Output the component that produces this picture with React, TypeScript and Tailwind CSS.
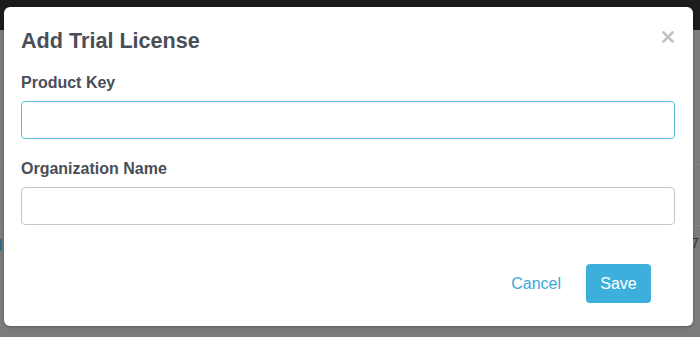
import React from "react";

const App: React.FC = () => {
  return (
    <div className="relative h-[337px] w-[700px] overflow-hidden bg-[#7b7b7b] font-['Liberation_Sans',Arial,sans-serif]">
      {/* page behind the overlay */}
      <div className="h-[30px] bg-[#1c1c1c]" />
      <div className="mt-[134px] h-px bg-[#858585]" />
      <div className="mt-[60px] h-px bg-[#858585]" />
      <div className="flex items-start justify-between">
        <div className="mt-[13px] h-[12px] w-[2px] bg-[#2f6f86]" />
        <span className="mt-[10px] mr-[1px] text-[14px] leading-none text-[#333]">7</span>
      </div>

      {/* MODAL */}
      <div className="absolute left-[4px] top-[7px] h-[319px] w-[689px] rounded-[6px] bg-white pl-[17px] pr-[18px] pt-[22px] shadow-[0_1px_3px_rgba(0,0,0,0.25)]">
        <div className="flex items-start justify-between">
          <h2 className="text-[21.6px] font-bold leading-[24px] text-[#494e57]">
            Add Trial License
          </h2>
          <button className="mr-[1px] mt-[2px] text-[#c2c2c2]" aria-label="Close">
            <svg width="12" height="12" viewBox="0 0 12 12">
              <path d="M1.5 1.5 L10.5 10.5 M10.5 1.5 L1.5 10.5" stroke="currentColor" strokeWidth="2.6" strokeLinecap="square" />
            </svg>
          </button>
        </div>

        <label className="mt-[20px] block text-[16px] font-bold leading-[20px] text-[#494e57]">
          Product Key
        </label>
        <input
          type="text"
          className="mt-[8px] block h-[38px] w-full rounded-[4px] border border-[#5cbbe6] bg-white px-3 text-[16px] outline-none"
        />

        <label className="mt-[20px] block text-[16px] font-bold leading-[20px] text-[#494e57]">
          Organization Name
        </label>
        <input
          type="text"
          className="mt-[8px] block h-[38px] w-full rounded-[4px] border border-[#c3c7cf] bg-white px-3 text-[16px] outline-none"
        />

        <div className="mt-[39px] flex items-center justify-end pr-[24px]">
          <button className="text-[16px] leading-[20px] text-[#3aa9da]">Cancel</button>
          <button className="ml-[25px] h-[39px] w-[65px] rounded-[4px] bg-[#3dafdc] text-[16px] text-white">
            Save
          </button>
        </div>
      </div>
    </div>
  );
};

export default App;
